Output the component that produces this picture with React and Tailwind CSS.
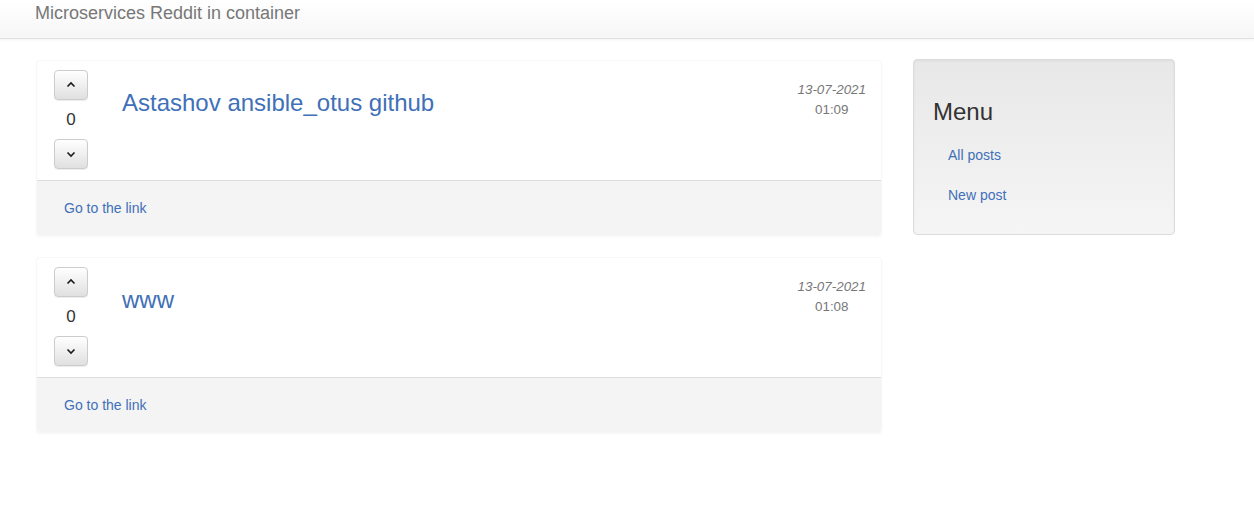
import React from 'react';

const posts = [
  { title: 'Astashov ansible_otus github', votes: 0, date: '13-07-2021', time: '01:09' },
  { title: 'www', votes: 0, date: '13-07-2021', time: '01:08' },
];

const Chevron = ({ up }) => (
  <svg width="12" height="12" viewBox="0 0 12 12" fill="none" stroke="#1a1a1a" strokeWidth="1.6">
    {up ? <path d="M2.5 7.5 6 4 9.5 7.5" /> : <path d="M2.5 4.5 6 8 9.5 4.5" />}
  </svg>
);

const VoteButton = ({ up }) => (
  <button className="w-[34px] h-[30px] flex items-center justify-center rounded-[4px] border border-[#ccc] bg-gradient-to-b from-white to-[#e0e0e0] shadow-[0_1px_1px_rgba(0,0,0,0.075)]">
    <Chevron up={up} />
  </button>
);

const Post = ({ post }) => (
  <div className="mb-[21px] border border-[#f7f7f7] rounded-[4px] shadow-[0_1px_2px_rgba(0,0,0,0.04)] bg-white">
    <div className="flex pt-[9px] pb-[11px] pl-[17px] pr-[15px]">
      <div className="flex flex-col items-center w-[34px]">
        <VoteButton up />
        <div className="h-[39px] flex items-center justify-center text-[17px] text-[#333]">{post.votes}</div>
        <VoteButton />
      </div>
      <div className="flex-1 pl-[34px]">
        <a href="#" className="block mt-[20px] text-[24px] leading-[26px] text-[#4070b8]">{post.title}</a>
      </div>
      <div className="pt-[10px] text-center text-[13.4px] leading-[20px] text-[#777]">
        <div className="italic">{post.date}</div>
        <div>{post.time}</div>
      </div>
    </div>
    <div className="h-[55px] flex items-center pl-[27px] bg-[#f4f4f4] border-t border-[#ddd] rounded-b-[4px]">
      <a href="#" className="text-[14px] text-[#4070b8]">Go to the link</a>
    </div>
  </div>
);

export default function App() {
  return (
    <div className="min-h-[517px] bg-white" style={{ fontFamily: '"Liberation Sans", Arial, sans-serif' }}>
      <div className="h-[39px] border-b border-[#e2e2e2] bg-gradient-to-b from-white to-[#f6f6f6] shadow-[0_1px_3px_rgba(0,0,0,0.05)]">
        <div className="pl-[35px] pt-[3px] text-[18px] leading-[20px] text-[#777]">Microservices Reddit in container</div>
      </div>
      <div className="flex pl-[36px] pt-[21px] gap-[31px]">
        <div className="w-[846px]">
          {posts.map((post, i) => (
            <Post key={i} post={post} />
          ))}
        </div>
        <div className="w-[262px] self-start">
          <div className="border border-[#dcdcdc] rounded-[4px] bg-gradient-to-b from-[#e8e8e8] to-[#f5f5f5] px-[19px] pt-[19px] pb-[19px] -mt-[1px] shadow-[inset_0_1px_3px_rgba(0,0,0,0.05)]">
            <h3 className="mt-[20px] mb-[10px] text-[24px] leading-[26px] text-[#333]">Menu</h3>
            <ul>
              <li><a href="#" className="block px-[15px] py-[10px] text-[14px] leading-[20px] text-[#4070b8]">All posts</a></li>
              <li><a href="#" className="block px-[15px] py-[10px] text-[14px] leading-[20px] text-[#4070b8]">New post</a></li>
            </ul>
          </div>
        </div>
      </div>
    </div>
  );
}
